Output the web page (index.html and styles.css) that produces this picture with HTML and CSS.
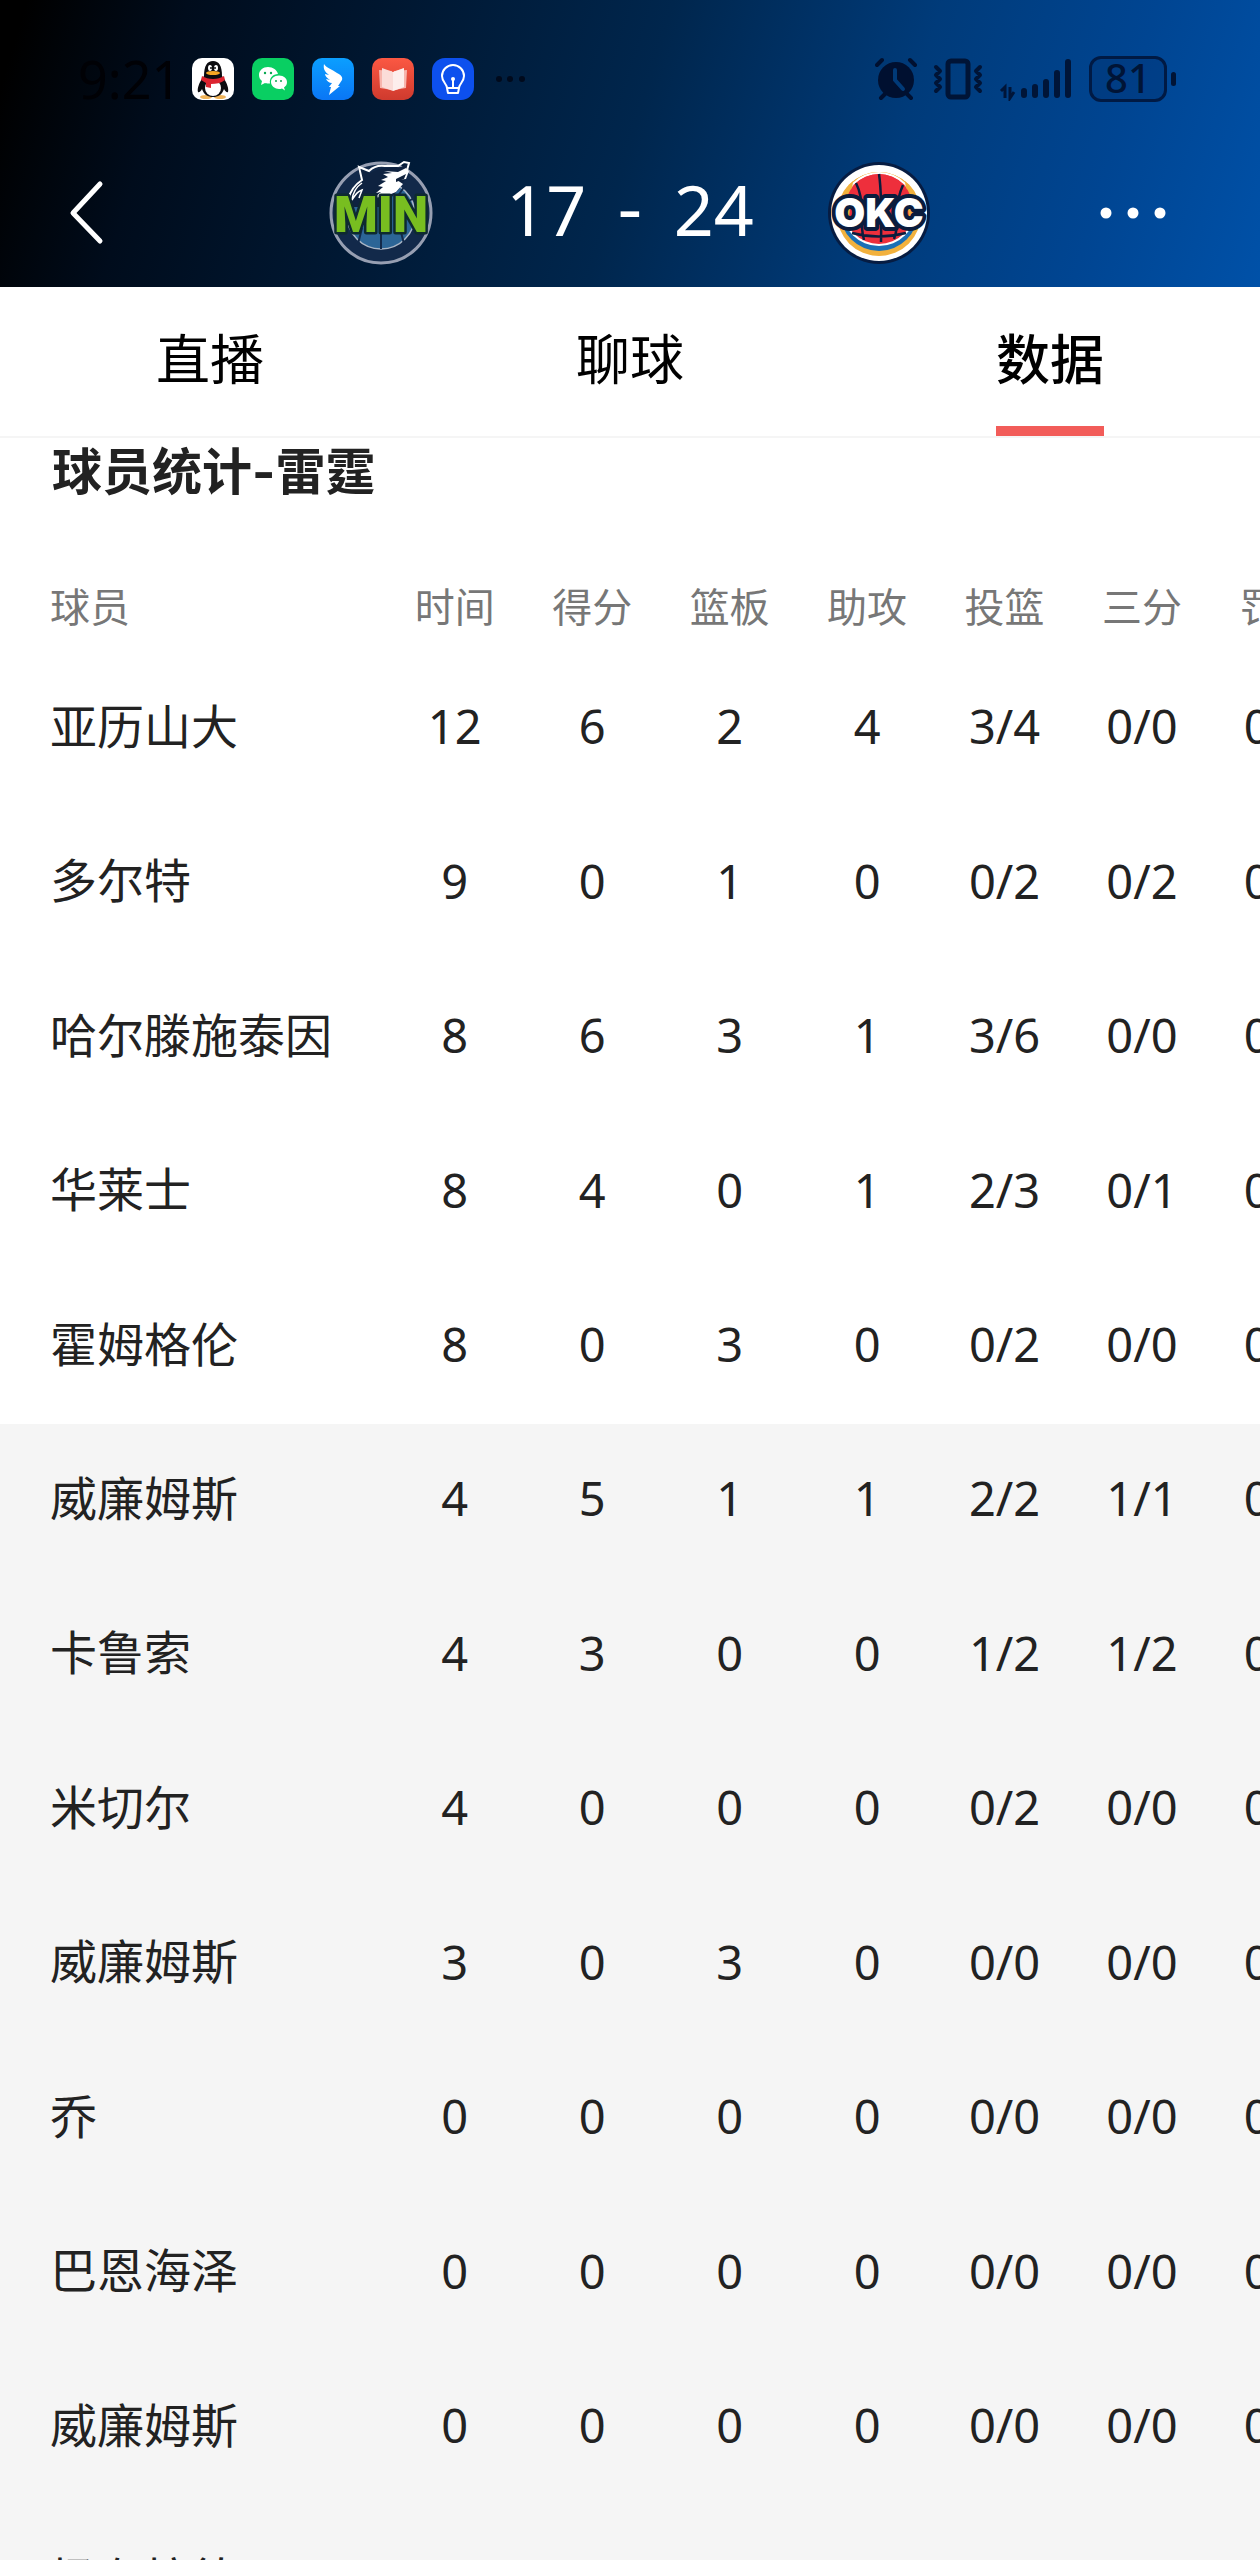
FILE: index.html
```html
<!DOCTYPE html>
<html lang="zh-CN">
<head>
  <meta charset="UTF-8" />
  <title>MIN 17 - 24 OKC</title>
  <meta name="viewport" content="width=device-width, initial-scale=1.0" />
  <link rel="stylesheet" href="styles.css">
</head>
<body>
  <header class="header">
    <div class="status-bar">
      <div class="status-left">
        <span class="clock">9:21</span>
        <div class="app-icons">
          <!-- penguin -->
          <svg viewBox="0 0 42 42">
            <rect width="42" height="42" rx="10" fill="#fff"/>
            <ellipse cx="14" cy="39" rx="6" ry="2" fill="#f0b45a"/>
            <ellipse cx="28" cy="39" rx="6" ry="2" fill="#f0b45a"/>
            <path d="M12 18C12 8 15 3 21 3s9 5 9 15l2 3c3 4 5 10 4 13-1 1-3-1-4-3-2 6-6 8-11 8s-9-2-11-8c-1 2-3 4-4 3-1-3 1-9 4-13z" fill="#0c0c10"/>
            <ellipse cx="21" cy="30" rx="8" ry="8" fill="#fff"/>
            <path d="M10 18c6 4 16 4 22 0l1 4c-4 3-9 4-14 4v4l-5-1v-4l-5-3z" fill="#dc2430"/>
            <ellipse cx="18" cy="10" rx="2" ry="3" fill="#fff"/>
            <ellipse cx="24" cy="10" rx="2" ry="3" fill="#fff"/>
            <circle cx="19" cy="10" r="1" fill="#111"/>
            <circle cx="23" cy="10" r="1" fill="#111"/>
            <ellipse cx="21" cy="15" rx="7" ry="2" fill="#f5a623"/>
          </svg>
          <!-- chat bubbles -->
          <svg viewBox="0 0 42 42">
            <rect width="42" height="42" rx="10" fill="#09cf62"/>
            <path d="M16 9c-5 0-9 3.500-9 8 0 2.500 1 4.500 3 6l-1 4 4-2c1 .4 3 .6 5 .4C17 20 21 16 26 16c-1-4-5-7-10-7z" fill="#fff"/>
            <path d="M27 17.500c-5 0-8 3-8 6.500 0 4 4 7 8 7 1 0 2 0 3-.5l3 2-1-3c2-1.500 3-3 3-5.500 0-3.500-3-6.500-8-6.500z" fill="#fff"/>
            <g fill="#09a850"><circle cx="13" cy="15" r="1.200"/><circle cx="19" cy="15" r="1.200"/><circle cx="24" cy="23" r="1"/><circle cx="29" cy="23" r="1"/></g>
          </svg>
          <!-- wing -->
          <svg viewBox="0 0 42 42">
            <defs><linearGradient id="wing" x2="0" y2="1"><stop stop-color="#0b9fff"/><stop offset="1" stop-color="#0a76f5"/></linearGradient></defs>
            <rect width="42" height="42" rx="10" fill="url(#wing)"/>
            <path d="M12 6c2 4 8 5 13 9 4 2 6 4 5 7l-4 6h2l-11 9 2-8h-2l3-4c-3 0-5-2-6-4l4 1c-3-2-5-4-5-6l4 1c-4-3-6-6-5-11z" fill="#fff"/>
          </svg>
          <!-- book -->
          <svg viewBox="0 0 42 42">
            <defs><linearGradient id="book" x2="0" y2="1"><stop stop-color="#fb5843"/><stop offset="1" stop-color="#cf3a2e"/></linearGradient></defs>
            <rect width="42" height="42" rx="10" fill="url(#book)"/>
            <path d="M7 12l13 1v19L8 30zM35 12l-13 1v19l12-2z" fill="#f7b5ad"/>
            <path d="M10 10l11 4v19l-11-4zM32 10l-11 4v19l11-4z" fill="#fbdcd8"/>
            <path d="M21 14l11-4v19l-11 4z" fill="#fff" opacity=".5"/>
          </svg>
          <!-- bulb -->
          <svg viewBox="0 0 42 42">
            <rect width="42" height="42" rx="13" fill="#0d50ee"/>
            <g fill="none" stroke="#fff" stroke-width="2" stroke-linejoin="round">
              <path d="M15 30c0-4-5-6-5-12a11 11 0 0 1 22 0c0 6-5 8-5 12zM15 30l1 5h10l1-5M21 22v8"/>
            </g>
            <circle cx="21" cy="21" r="2" fill="#fff"/>
          </svg>
        </div>
        <svg class="status-dots" viewBox="0 0 32 10"><circle cx="5" cy="5" r="3"/><circle cx="16" cy="5" r="3"/><circle cx="28" cy="5" r="3"/></svg>
      </div>

      <div class="status-right">
        <!-- alarm -->
        <svg class="icon-alarm" viewBox="0 0 42 44">
          <g stroke="#001030" stroke-width="4" stroke-linecap="round"><path d="M2 8l5-5M40 8l-5-5M10 37l-4 4M32 37l4 4"/></g>
          <circle cx="21" cy="23" r="18" fill="#001030"/>
          <path d="M20 13v10l8 9" fill="none" stroke="#003a78" stroke-width="4" stroke-linecap="round"/>
        </svg>
        <!-- vibrate -->
        <svg class="icon-vibrate" viewBox="0 0 50 44">
          <g fill="none" stroke="#001436" stroke-linejoin="round" stroke-linecap="round">
            <rect x="15" y="4" width="20" height="36" rx="3" stroke-width="5"/>
            <path stroke-width="4" d="M3 10l4 4-4 4 4 4-4 4 4 4-4 4M47 10l-4 4 4 4-4 4 4 4-4 4 4 4"/>
          </g>
        </svg>
        <!-- signal -->
        <svg class="icon-signal" viewBox="0 0 74 44">
          <g stroke="#001538" stroke-width="6" stroke-linecap="round"><path d="M25 38v-4M36 38v-8M47 38v-13M58 38v-22M69 38V5"/></g>
          <path d="M2 34l4-4v11M11 30v11l4-6" fill="none" stroke="#001538" stroke-width="3"/>
        </svg>
        <div class="battery">81</div>
      </div>
    </div>

    <nav class="match-bar">
      <button class="back" aria-label="返回">
        <svg viewBox="0 0 40 70"><path d="M36 6L9 35l27 28" fill="none" stroke="#fff" stroke-width="5" stroke-linecap="round" stroke-linejoin="round"/></svg>
      </button>
      <div class="match">
        <svg class="team-logo" viewBox="0 0 110 110">
          <circle cx="55" cy="55" r="50" fill="#12294a" stroke="#979fb2" stroke-width="3"/>
          <circle cx="55" cy="57" r="34" fill="#2c6596" stroke="#aab6c6" stroke-width="1.500"/>
          <path d="M55 57v34M36 70l-4 16M74 70l4 16M72 38l8-12M78 46l10-6" stroke="#12294a" stroke-width="2" fill="none"/>
          <path d="M22 42c3-10 8-17 13-20l-3-12 12 5c10-6 22-5 31-6l7-4-1 6-2 10-6 10-16 18H22z" fill="#0e2240"/>
          <path d="M22 42c2-9 8-16 14-20l-3-13 10 4c4-4 9-6 16-5h13l6-4 5 1-3 11" fill="none" stroke="#fff" stroke-width="2"/>
          <path d="M57 16l9-1-8-2 14 1 8-4 3 3-3 8-9 1 6 4-7 8-10 4-12 2 7-6-5 1 7-6-5-1 8-5-5-1 7-3z" fill="#fff"/>
          <path d="M36 25c-6 4-9 9-10 17 4-6 5-8 10-10l-3 8" fill="none" stroke="#fff" stroke-width="1.500"/>
          <path d="M70 21l10-5-2 5-8 3z" fill="#10223d"/>
          <text class="logo-text logo-min" x="55" y="74" text-anchor="middle">MIN</text>
        </svg>
        <div class="score"><span>17</span><span class="dash">-</span><span>24</span></div>
        <svg class="team-logo" viewBox="0 0 110 110">
          <circle cx="55" cy="55" r="51" fill="#061c42"/>
          <circle cx="55" cy="55" r="48" fill="#fff"/>
          <circle cx="55" cy="56" r="42" fill="#f2b13d"/>
          <circle cx="55" cy="54" r="39" fill="#1b6fb5"/>
          <path d="M15 54a40 40 0 0 1 80 0z" fill="#f2b13d"/>
          <circle cx="55" cy="51" r="37" fill="#fff"/>
          <circle cx="55" cy="51" r="35" fill="#ee2f3c"/>
          <path d="M15 51a39 39 0 0 1 14-28L25 60zM95 51a39 39 0 0 0-14-28l4 37z" fill="#f2b13d"/>
          <path d="M21 51a34 35 0 0 1 68 0z" fill="#ee2f3c"/>
          <path d="M32 25q6 12 6 30-1 16 2 27M55 16q3 20 2 68M79 27q-6 13-6 29 1 14-3 25M28 75q26 7 54 0" fill="none" stroke="#0b1c3d" stroke-width="2.500"/>
          <text class="logo-text logo-okc" x="55" y="69" text-anchor="middle">OKC</text>
        </svg>
      </div>
      <button class="more" aria-label="更多">
        <svg viewBox="0 0 66 14"><g fill="#fff"><circle cx="6" cy="7" r="5.500"/><circle cx="33" cy="7" r="5.500"/><circle cx="60" cy="7" r="5.500"/></g></svg>
      </button>
    </nav>
  </header>

  <nav class="tabs">
    <a href="#live" class="tab">直播</a>
    <a href="#chat" class="tab">聊球</a>
    <a href="#stats" class="tab active">数据</a>
  </nav>

  <main class="content" id="stats">
    <h2 class="title">球员统计-雷霆</h2>
    <table class="stats">
      <thead>
        <tr><th>球员</th><th>时间</th><th>得分</th><th>篮板</th><th>助攻</th><th>投篮</th><th>三分</th><th>罚球</th></tr>
      </thead>
      <tbody>
        <tr><td>亚历山大</td><td>12</td><td>6</td><td>2</td><td>4</td><td>3/4</td><td>0/0</td><td>0/0</td></tr>
        <tr><td>多尔特</td><td>9</td><td>0</td><td>1</td><td>0</td><td>0/2</td><td>0/2</td><td>0/0</td></tr>
        <tr><td>哈尔滕施泰因</td><td>8</td><td>6</td><td>3</td><td>1</td><td>3/6</td><td>0/0</td><td>0/0</td></tr>
        <tr><td>华莱士</td><td>8</td><td>4</td><td>0</td><td>1</td><td>2/3</td><td>0/1</td><td>0/0</td></tr>
        <tr><td>霍姆格伦</td><td>8</td><td>0</td><td>3</td><td>0</td><td>0/2</td><td>0/0</td><td>0/0</td></tr>
      </tbody>
      <tbody class="bench">
        <tr><td>威廉姆斯</td><td>4</td><td>5</td><td>1</td><td>1</td><td>2/2</td><td>1/1</td><td>0/0</td></tr>
        <tr><td>卡鲁索</td><td>4</td><td>3</td><td>0</td><td>0</td><td>1/2</td><td>1/2</td><td>0/0</td></tr>
        <tr><td>米切尔</td><td>4</td><td>0</td><td>0</td><td>0</td><td>0/2</td><td>0/0</td><td>0/0</td></tr>
        <tr><td>威廉姆斯</td><td>3</td><td>0</td><td>3</td><td>0</td><td>0/0</td><td>0/0</td><td>0/0</td></tr>
        <tr><td>乔</td><td>0</td><td>0</td><td>0</td><td>0</td><td>0/0</td><td>0/0</td><td>0/0</td></tr>
        <tr><td>巴恩海泽</td><td>0</td><td>0</td><td>0</td><td>0</td><td>0/0</td><td>0/0</td><td>0/0</td></tr>
        <tr><td>威廉姆斯</td><td>0</td><td>0</td><td>0</td><td>0</td><td>0/0</td><td>0/0</td><td>0/0</td></tr>
        <tr><td>扬布拉德</td><td>0</td><td>0</td><td>0</td><td>0</td><td>0/0</td><td>0/0</td><td>0/0</td></tr>
      </tbody>
    </table>
  </main>
</body>
</html>
```
FILE: styles.css
```css
* {
  box-sizing: border-box;
}

body {
  margin: 0;
  height: 100vh;
  display: flex;
  flex-direction: column;
  overflow: hidden;
  font-family: "Noto Sans", "Noto Sans CJK SC", sans-serif;
  background: #fff;
  color: #222;
}

svg {
  display: block;
}

button {
  background: none;
  border: 0;
  padding: 0;
  cursor: pointer;
}

.header {
  flex: none;
  padding: 48px 64px 20px;
  background: linear-gradient(107deg, #000 2%, #000c1c 14%, #00162f 28%, #00264d 50%, #003b7a 70%, #004592 86%, #0051a8 100%);
}

/* status bar */
.status-bar {
  display: flex;
  justify-content: space-between;
  height: 62px;
  padding: 0 20px 0 14px;
}

.status-left, .status-right, .app-icons {
  display: flex;
  align-items: center;
}

.clock {
  width: 114px;
  font-size: 52px;
  line-height: 62px;
  color: #000105;
}

.app-icons {
  gap: 18px;
}

.app-icons svg {
  width: 42px;
  height: 42px;
}

.status-dots {
  width: 32px;
  height: 10px;
  margin-left: 20px;
  fill: #000a1c;
}

.status-right {
  gap: 16px;
}

.icon-alarm {
  width: 42px;
  height: 44px;
}

.icon-vibrate {
  width: 50px;
  height: 44px;
}

.icon-signal {
  width: 74px;
  height: 44px;
}

.battery {
  position: relative;
  width: 78px;
  height: 46px;
  margin-right: 9px;
  border: 3px solid #001a44;
  border-radius: 12px;
  background: rgba(0, 20, 60, 0.15);
  color: #001436;
  font-size: 40px;
  font-weight: 500;
  line-height: 38px;
  text-align: center;
}

.battery::after {
  content: "";
  position: absolute;
  right: -12px;
  top: 13px;
  width: 5px;
  height: 14px;
  border-radius: 3px;
  background: #001436;
}

/* match bar */
.match-bar {
  display: grid;
  grid-template-columns: 1fr auto 1fr;
  align-items: center;
  height: 157px;
  padding-top: 48px;
  padding-bottom: 8px;
}

.back svg {
  width: 40px;
  height: 70px;
}

.match {
  display: flex;
  align-items: center;
  gap: 70px;
}

.team-logo {
  width: 110px;
  height: 110px;
}

.logo-text {
  font-weight: 900;
  paint-order: stroke;
  stroke-linejoin: round;
}

.logo-min {
  font-family: Roboto, sans-serif;
  font-size: 50px;
  fill: #78be20;
  stroke: #0e2a30;
  stroke-width: 5px;
}

.logo-okc {
  font-family: Inter, sans-serif;
  font-size: 40px;
  fill: #fff;
  stroke: #0b1c3d;
  stroke-width: 8px;
}

.score {
  display: flex;
  gap: 31px;
  padding-bottom: 8px;
  color: #fff;
  font-size: 70px;
  line-height: 84px;
}

.dash {
  font-family: "DejaVu Sans", sans-serif;
}

.more {
  justify-self: end;
  padding-right: 30px;
}

.more svg {
  width: 66px;
  height: 14px;
}

/* tabs */
.tabs {
  flex: none;
  display: grid;
  grid-template-columns: repeat(3, 1fr);
  justify-items: center;
  height: 151px;
  border-bottom: 2px solid #f5f5f5;
}

.tab {
  height: 149px;
  border-bottom: 10px solid transparent;
  color: #000;
  font-size: 54px;
  line-height: 144px;
  text-decoration: none;
}

.tab.active {
  border-bottom-color: #f25c59;
  font-weight: 500;
}

/* player table */
.content {
  flex: 1;
  min-height: 0;
  overflow: auto;
  scrollbar-width: none;
}

.title {
  margin: 0 0 54px;
  padding-left: 52px;
  font-family: Inter, "Noto Sans CJK SC", sans-serif;
  font-size: 50px;
  font-weight: bold;
  line-height: 68px;
}

.stats {
  border-collapse: collapse;
  table-layout: fixed;
  width: 107%;
}

.stats th, .stats td {
  padding: 0;
  text-align: center;
  white-space: nowrap;
}

.stats th {
  height: 92px;
  padding-bottom: 2px;
  color: #777;
  font-size: 40px;
  font-weight: normal;
}

.stats td {
  height: 154px;
  padding-bottom: 6px;
  font-size: 47px;
}

.stats tr:nth-child(even) td {
  height: 155px;
}

.stats th:first-child, .stats td:first-child {
  width: 386px;
  padding-left: 50px;
  text-align: left;
}

.stats td:first-child {
  padding-bottom: 12px;
  font-family: "Noto Sans CJK SC", sans-serif;
}

.bench {
  background: #f5f5f5;
}
```
